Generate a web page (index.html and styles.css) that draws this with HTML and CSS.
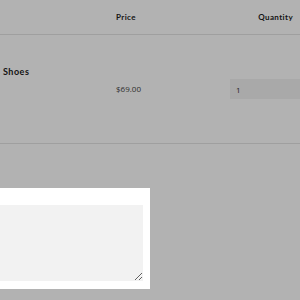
FILE: index.html
```html
<!DOCTYPE html>
<html>
<head>
<meta charset="utf-8">
<link rel="stylesheet" href="styles.css">
</head>
<body>
<div class="cart">
  <div class="row head">
    <div class="col product"></div>
    <div class="col price">Price</div>
    <div class="col qty">Quantity</div>
  </div>
  <div class="row item">
    <div class="col product"><span class="name">Shoes</span></div>
    <div class="col price"><span class="amount">$69.00</span></div>
    <div class="col qty"><input class="qty-input" type="text" value="1"></div>
  </div>
</div>
<div class="overlay"></div>
<div class="modal">
  <textarea class="note"></textarea>
</div>
</body>
</html>
```
FILE: styles.css
```css
html, body { margin: 0; padding: 0; background: #fff; }
body { font-family: "Open Sans", "DejaVu Sans", sans-serif; color: #333; width: 300px; height: 300px; overflow: hidden; line-height: 1; }
.cart { width: 300px; }
.row { display: flex; border-bottom: 1px solid #e4e4e4; }
.col.product { width: 116px; }
.col.price { width: 114px; }
.col.qty { flex: 1; min-width: 0; }
.head { height: 34px; align-items: center; font-family: "Lato", sans-serif; font-size: 8px; font-weight: 700; letter-spacing: 0.4px; color: #222; }
.head .qty { text-align: right; padding-right: 7px; }
.item { height: 108px; }
.item .product { padding: 32px 0 0 3px; box-sizing: border-box; }
.name { display: block; font-family: "Lato", sans-serif; font-size: 9px; font-weight: 700; letter-spacing: 0.5px; color: #222; }
.item .price { padding-top: 50px; }
.amount { display: block; font-size: 8px; color: #444; }
.item .qty { padding-top: 44px; }
.qty-input { display: block; box-sizing: border-box; width: 100%; height: 20px; border: 0; background: #f2f2f2; font-family: inherit; font-size: 8px; color: #333; padding: 0 6px; outline: none; }
.overlay { position: fixed; inset: 0; background: rgba(0,0,0,0.3); }
.modal { position: absolute; left: 0; top: 188px; width: 150px; height: 101px; background: #fff; }
.note { display: block; box-sizing: border-box; margin-top: 17px; width: 143px; height: 76px; border: 0; background: #f2f2f2; padding: 0; outline: none; }
```
